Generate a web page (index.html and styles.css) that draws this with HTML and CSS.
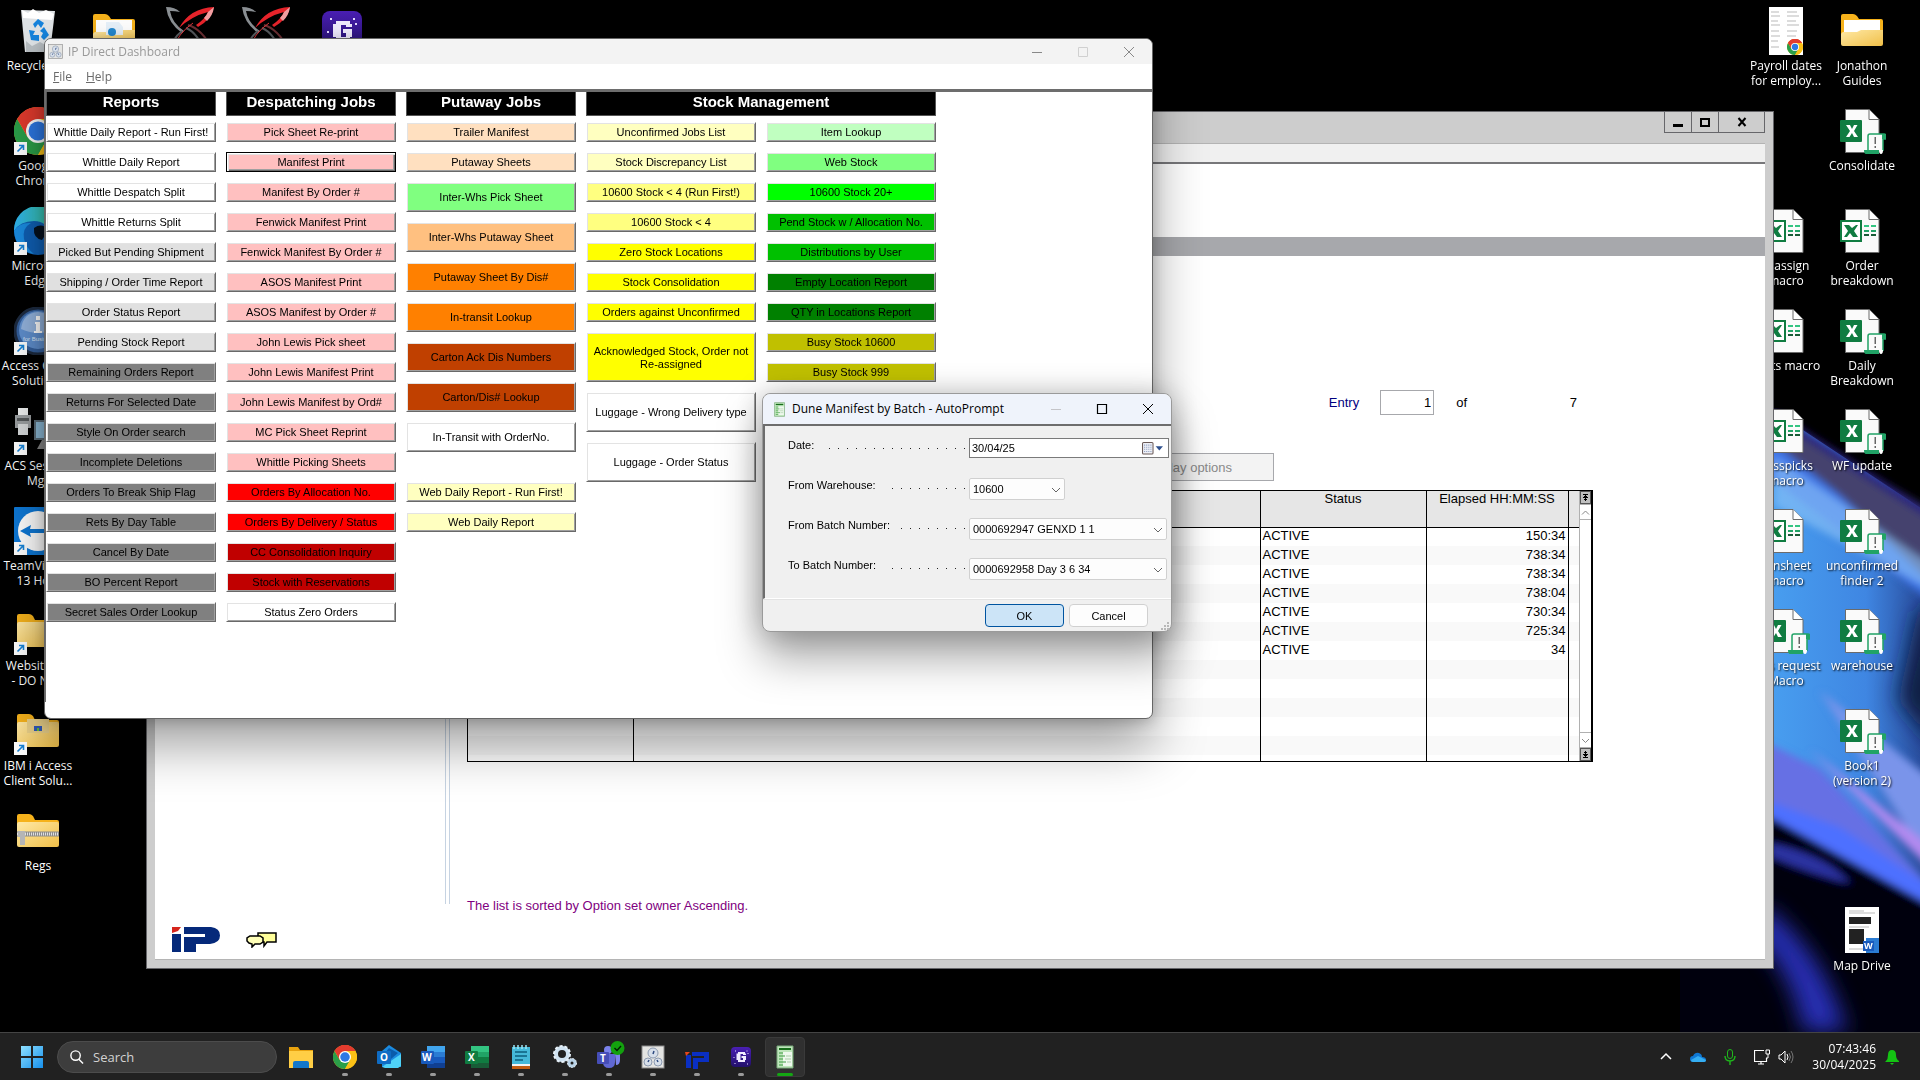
FILE: index.html
```html
<!DOCTYPE html>
<html lang="en">
<head>
  <meta charset="UTF-8" />
  <meta name="viewport" content="width=device-width, initial-scale=1.0" />
  <title>IP Direct Dashboard</title>
  <link rel="stylesheet" href="styles.css">
</head>
<body>
  <!-- shared icon symbols -->
  <svg class="defs" aria-hidden="true">
    <defs>
      <linearGradient id="gFolder" x1="0" y1="0" x2="1" y2="1"><stop offset="0" stop-color="#ffe9a6"/><stop offset="1" stop-color="#f0bf48"/></linearGradient>
      <linearGradient id="gEdge" x1="0" y1="0" x2="1" y2="0"><stop offset="0" stop-color="#2fb2f0"/><stop offset="1" stop-color="#3ccf8e"/></linearGradient>
      <linearGradient id="gG" x1="0" y1="0" x2="0" y2="1"><stop offset="0" stop-color="#4a1fb4"/><stop offset="1" stop-color="#22106a"/></linearGradient>
      <linearGradient id="gWin" x1="0" y1="0" x2="1" y2="1"><stop offset="0" stop-color="#8ee0ff"/><stop offset="1" stop-color="#1690ec"/></linearGradient>
    </defs>
    <symbol id="arrow" viewBox="0 0 13 13"><rect width="13" height="13" fill="#fff"/><path d="M3.500 9.500 9 4M5 3.500h4.500V8" fill="none" stroke="#1783d8" stroke-width="1.600"/></symbol>
    <symbol id="chrome" viewBox="0 0 48 48">
      <circle cx="24" cy="24" r="24" fill="#fbc116"/>
      <path d="M24 24 3.200 12A24 24 0 0 1 44.800 12H24z" fill="#e33b2e"/>
      <path d="M3.200 12A24 24 0 0 0 24 48L34.400 30 24 24 13.600 30z" fill="#2b9f49"/>
      <path d="M3.200 12 13.600 30 24 13 44.800 12A24 24 0 0 0 3.200 12" fill="#e33b2e"/>
      <path d="M24 12h20.800A24 24 0 0 1 24 48l10.400-18z" fill="#fbc116"/>
      <circle cx="24" cy="24" r="12" fill="#fff"/><circle cx="24" cy="24" r="9.500" fill="#2d78e4"/>
    </symbol>
    <symbol id="folder" viewBox="0 0 48 48">
      <path d="M3 9q0-2 2-2h10q2 0 4 2l2 3h22q2 0 2 2v23H3z" fill="#f6b21b"/>
      <path d="M6 13h36v15H6z" fill="#fff"/>
      <path d="M3 28q0-3 3-3h13l4-2h22v14q0 2-2 2H5q-2 0-2-2z" fill="url(#gFolder)"/>
    </symbol>
    <symbol id="folder2" viewBox="0 0 48 48">
      <path d="M3 9q0-2 2-2h10q2 0 4 2l2 4h22q2 0 2 2v22H3z" fill="#f6b21b"/>
      <path d="M3 17q0-2 2-2h38q2 0 2 2v21q0 2-2 2H5q-2 0-2-2z" fill="url(#gFolder)"/>
    </symbol>
    <symbol id="page" viewBox="0 0 48 48"><path d="M7.500 2.500H31l10 10v33H7.500z" fill="#fafafa" stroke="#6b6b6b"/><path d="M31 2.500v10h10" fill="#fff" stroke="#6b6b6b"/></symbol>
    <symbol id="xlsm" viewBox="0 0 48 48">
      <use href="#page"/>
      <rect x="2" y="13" width="22" height="22" rx="1" fill="#107c41"/>
      <path d="M8 18h4l2 4 2-4h3.500L16 24l4 6h-4l-2-4-2.500 4H8l4-6z" fill="#fff"/>
      <path d="M30 43V29q0-2 2-2h14q2 0 2 2v3h-3v12" fill="#fafafa" stroke="#21a366" stroke-width="1.500"/>
      <path d="M44 27h3q1 0 1 2v3h-4zM26 43h15v4H28q-2 0-2-4z" fill="#21a366"/>
      <path d="M41 43h4q0 4-2 4t-2-4z" fill="#fff"/>
      <path d="M36.500 30h1.500v7h-1.500zM36.500 39h1.500v2h-1.500z" fill="#666"/>
    </symbol>
    <symbol id="xlsx" viewBox="0 0 48 48">
      <use href="#page"/>
      <rect x="3" y="14" width="20" height="20" fill="#fff" stroke="#107c41" stroke-width="2"/>
      <path d="M6 18h5l3 3 4-3h2l-4 6 4 6h-5l-3-4-3 4H6l4-6z" fill="#107c41"/>
      <path d="M26 19h5M33 19h5" stroke="#33c481" stroke-width="2"/><path d="M26 24h5M33 24h5" stroke="#21a366" stroke-width="2"/><path d="M26 28h5M33 28h5" stroke="#185c37" stroke-width="2"/>
    </symbol>
    <symbol id="swirl" viewBox="0 0 48 48">
      <path d="M0 0q9 0 14 5-5-1-10-1 2 12 14 20l-2 2Q2 16 0 0z" fill="#8b9094"/>
      <path d="M20 21q12 5 19 25" fill="none" stroke="#55595d" stroke-width="2"/>
      <path d="M22 18q14 4 24 24" fill="none" stroke="#6c3034" stroke-width="2"/>
      <path d="M16 24q-10 8-12 20" fill="none" stroke="#5b5f63" stroke-width="2"/>
      <path d="M27 16Q12 26 6 44" fill="none" stroke="#e0363c" stroke-width="1"/>
      <path d="M48 0Q24 1 13 21 26 9 42 5q-3 7-12 13l2 2Q46 12 48 0z" fill="#e8242b"/>
      <path d="M48 0l-6 5q-1 3-4 6l3 3q6-6 7-14z" fill="#f3a0a3"/>
    </symbol>
    <symbol id="gapp" viewBox="0 0 40 40">
      <rect width="40" height="40" rx="8" fill="url(#gG)"/>
      <path d="M28 13v-3H14v3h-3v13h3v4h14v-4h2v-8h-9v4h3v4h-5V14h5v2h6v-3z" fill="#f1ecff"/>
      <path d="M8 7h2v2H8zM31 7h2v2h-2zM5 20h2v2H5zM33 12h2v2h-2zM7 32h2v2H7zM32 33h2v2h-2z" fill="#e4dcff"/>
    </symbol>
    <symbol id="report" viewBox="0 0 24 24"><path d="M4 1h16v22H4z" fill="#bfe6bc" stroke="#79a878"/><path d="M6 4h12" stroke="#176d1a" stroke-width="2"/><path d="M10 7h9v14h-9z" fill="#eef8ed"/><path d="M6 8h4M6 11h6M6 14h4M6 17h7M6 20h4" stroke="#3d9a40"/><path d="M13 11h5M12 14h6M14 17h4" stroke="#a9cda8"/></symbol>
    <symbol id="gauge" viewBox="0 0 24 24"><rect x="1" y="1" width="22" height="22" fill="#e4e4e2" stroke="#8c8c8c"/><g fill="#d7dfea" stroke="#8c9ab0"><circle cx="12" cy="8" r="5"/><circle cx="7" cy="17" r="4"/><circle cx="17" cy="17" r="4"/></g><path d="M12 9l1-3M7 17l1-2M17 17l-1-2" stroke="#2e4a80" stroke-width="1.500"/></symbol>
    <symbol id="iplogo" viewBox="0 0 48 25">
      <path d="M0 7h9v18H0z" fill="#05297a"/><path d="M0 0h9L6 4 0 6z" fill="#d6251c"/>
      <path d="M12 0h27q9 1 9 8.500T38 17H24v8H12V10h21v-3H12z" fill="#05297a"/>
    </symbol>
  </svg>

  <main class="desktop">
    <!-- wallpaper ribbon -->
    <svg class="wallpaper" viewBox="0 0 240 640" preserveAspectRatio="none" aria-hidden="true">
      <defs>
        <filter id="b4"><feGaussianBlur stdDeviation="4"/></filter>
        <filter id="b10"><feGaussianBlur stdDeviation="11"/></filter>
        <linearGradient id="sky" x1="0" y1="0" x2="1" y2="0"><stop offset="0" stop-color="#4ba6f4"/><stop offset=".7" stop-color="#3f86e2"/><stop offset="1" stop-color="#2a4fa0"/></linearGradient>
      </defs>
      <path d="M60-20 240 102V526L90 420H60z" fill="url(#sky)"/>
      <g filter="url(#b4)">
        <path d="M60-14 250 104V180L160 90 60 10z" fill="#45426e"/>
        <path d="M60-20 250 106v8L60-10z" fill="#261c7c"/>
        <path d="M60 8 160 90 250 178v20L140 110 60 50z" fill="#3e74e8"/>
        <path d="M94 50 250 160v26L94 100z" fill="#8fc4f6" opacity=".6"/>
        <path d="M80 340 140 370 250 490v50L80 430z" fill="#6670e4"/>
        <path d="M140 290 250 380v90z" fill="#7a94ea"/>
        <path d="M130 350 250 450v22z" fill="#b48af0"/>
        <path d="M80 400 160 430 250 490v30L80 424z" fill="#4d70ff"/>
        <path d="M80 414 250 510v180H-20V420z" fill="#04040c"/>
        <path d="M90 446q60 14 80 42-40-10-80-28z" fill="#2a30a0"/>
      </g>
      <g filter="url(#b10)">
        <path d="M238 210 260 200V350L218 300z" fill="#101c40"/>
        <path d="M85 510q60 50 82 130h-44Q110 570 70 540z" fill="#272db4"/>
      </g>
    </svg>

    <ul class="icons icons-left">
      <li class="c1">
        <svg viewBox="0 0 48 48"><path d="M7 3 41 4 36 45H11z" fill="#dfe3e6"/><path d="M8 3l6 3 5-4 6 4 7-3 8 4-2 6-29-2z" fill="#fff"/><path d="M12 34l6 5 8-4 9 5-1 5H12z" fill="#b8bec2"/><path d="M19 17l5-5 6 4-3 5-3-4-3 4zM30 20l5 8-5 5-3-3 2-4-3-2zM15 23l6 1-2 4h6v6l-8-1z" fill="#1583dc"/></svg>
        <a href="#">Recycle Bin</a></li>
      <li class="c2"><svg viewBox="0 0 48 48"><use href="#folder"/><path d="M16 15h13l4 5v8H16z" fill="#e8f2fb"/><circle cx="22" cy="25" r="4" fill="#2489d0"/></svg></li>
      <li class="c3"><svg viewBox="0 0 48 48"><use href="#swirl"/></svg></li>
      <li class="c4"><svg viewBox="0 0 48 48"><use href="#swirl"/></svg></li>
      <li class="c5"><svg viewBox="0 0 48 48"><use href="#gapp" x="4" y="4" width="40" height="40"/></svg></li>
      <li class="c1"><svg viewBox="0 0 48 48"><use href="#chrome"/><use href="#arrow" y="35" width="13" height="13"/></svg><a href="#">Google<br>Chrome</a></li>
      <li class="c1"><svg viewBox="0 0 48 48"><circle cx="24" cy="24" r="24" fill="#0f5fb4"/><path d="M0 24A24 24 0 0 1 48 22q-2 10-14 10Q36 14 20 14 6 14 0 24z" fill="url(#gEdge)"/><path d="M0 24q6-9 17-8-9 5-7 16 2 9 10 15Q2 44 0 24z" fill="#1a8be0"/><path d="M20 21q9-6 14 3l-6 9q-9-2-8-12z" fill="#04101e"/><use href="#arrow" y="35" width="13" height="13"/></svg><a href="#">Microsoft<br>Edge</a></li>
      <li class="c1"><svg viewBox="0 0 48 48"><circle cx="24" cy="24" r="23" fill="#345f9c" stroke="#1d2b40" stroke-width="3"/><circle cx="24" cy="23" r="19" fill="#5f8fce"/><path d="M7 22q2-16 17-17 15 1 17 17-16 8-34 0z" fill="#94b4de"/><path d="M22 9h4v4h-4zM21 15h5v9h2v2h-8v-2h2v-7h-1z" fill="#fff"/><text x="9" y="34" class="tiny">for Business</text><use href="#arrow" y="35" width="13" height="13"/></svg><a href="#">Access Client<br>Solutions</a></li>
      <li class="c1"><svg viewBox="0 0 48 48"><path d="M4 1h10v8H4z" fill="#eef0f0"/><path d="M1 8h16v13H1z" fill="#9b9fa1"/><path d="M4 17h10v11H4z" fill="#d5d8d9"/><path d="M3 11h12v3H3z" fill="#55595b"/><path d="M20 13h27v20H20z" fill="#5b6d78"/><path d="M22 15h23v16H22z" fill="#8dbbd8"/><path d="M28 33h10l3 9H23z" fill="#888"/><use href="#arrow" y="35" width="13" height="13"/></svg><a href="#">ACS Session<br>Mgr</a></li>
      <li class="c1"><svg viewBox="0 0 48 48"><rect width="48" height="48" rx="1" fill="#0e78d6"/><circle cx="24" cy="24" r="20" fill="#fff"/><path d="M6 24l11-6-1 4h16l-1-4 11 6-11 6 1-4H16l1 4z" fill="#0e78d6"/><use href="#arrow" y="35" width="13" height="13"/></svg><a href="#">TeamViewer<br>13 Host</a></li>
      <li class="c1"><svg viewBox="0 0 48 48"><use href="#folder2"/><use href="#arrow" y="35" width="13" height="13"/></svg><a href="#">Websites IP<br>- DO NOT</a></li>
      <li class="c1"><svg viewBox="0 0 48 48"><use href="#folder2"/><path d="M13 12h22v14H13z" fill="#e9cf88"/><path d="M20 19h8v5h-8z" fill="#3059b8"/><path d="M23 21h2v3h-2z" fill="#6b3"/><use href="#arrow" y="35" width="13" height="13"/></svg><a href="#">IBM i Access<br>Client Solu...</a></li>
      <li class="c1"><svg viewBox="0 0 48 48"><use href="#folder2"/><path d="M3 27h42" stroke="#8c8c8c" stroke-width="5"/><path d="M3 27h42" stroke="#e0e0e0" stroke-width="3" stroke-dasharray="1 1"/><path d="M4 24h7v14H6V30H4z" fill="#b5b5b5"/></svg><a href="#">Regs</a></li>
    </ul>

    <ul class="icons icons-right">
      <li class="c1"><svg viewBox="0 0 48 48"><path d="M7 0h34v48H7z" fill="#fff"/><path d="M9 5h8M9 9h9M9 14h7M9 18h9M9 24h8M9 29h9M9 34h7M9 40h8M25 5h10M25 9h12M25 14h9M25 18h12M25 24h10M25 29h9" stroke="#b9b9b9"/><use href="#chrome" x="25" y="32" width="16" height="16"/></svg><a href="#">Payroll dates<br>for employ...</a></li>
      <li class="c2"><svg viewBox="0 0 48 48"><use href="#folder"/></svg><a href="#">Jonathon<br>Guides</a></li>
      <li class="c2"><svg viewBox="0 0 48 48"><use href="#xlsm"/></svg><a href="#">Consolidate</a></li>
      <li class="c1"><svg viewBox="0 0 48 48"><use href="#xlsx"/></svg><a href="#">reassign<br>macro</a></li>
      <li class="c2"><svg viewBox="0 0 48 48"><use href="#xlsx"/></svg><a href="#">Order<br>breakdown</a></li>
      <li class="c1"><svg viewBox="0 0 48 48"><use href="#xlsx"/></svg><a href="#">ports macro</a></li>
      <li class="c2"><svg viewBox="0 0 48 48"><use href="#xlsm"/></svg><a href="#">Daily<br>Breakdown</a></li>
      <li class="c1"><svg viewBox="0 0 48 48"><use href="#xlsx"/></svg><a href="#">misspicks<br>macro</a></li>
      <li class="c2"><svg viewBox="0 0 48 48"><use href="#xlsm"/></svg><a href="#">WF update</a></li>
      <li class="c1"><svg viewBox="0 0 48 48"><use href="#xlsx"/></svg><a href="#">runsheet<br>macro</a></li>
      <li class="c2"><svg viewBox="0 0 48 48"><use href="#xlsm"/></svg><a href="#">unconfirmed<br>finder 2</a></li>
      <li class="c1"><svg viewBox="0 0 48 48"><use href="#xlsm"/></svg><a href="#">pals request<br>Macro</a></li>
      <li class="c2"><svg viewBox="0 0 48 48"><use href="#xlsm"/></svg><a href="#">warehouse</a></li>
      <li class="c2"><svg viewBox="0 0 48 48"><use href="#xlsm"/></svg><a href="#">Book1<br>(version 2)</a></li>
      <li class="c2 last"><svg viewBox="0 0 48 48"><path d="M7 0h34v46H7z" fill="#fff"/><path d="M11 4h15M11 6h26M11 20h20M11 42h14" stroke="#bbb"/><path d="M11 10h22v7H11zM11 22h15v15H11z" fill="#222"/><path d="M28 31h13v15H28z" fill="#2b7cd3"/><rect x="25" y="34" width="11" height="10" fill="#185abd"/><text x="26" y="42" class="word-s">W</text></svg><a href="#">Map Drive</a></li>
    </ul>

    <!-- host session window -->
    <section class="win session">
      <header class="session-title">
        <button aria-label="Minimize"><svg viewBox="0 0 12 12"><path d="M1 8h10v3H1z"/></svg></button>
        <button aria-label="Maximize"><svg viewBox="0 0 12 12"><path d="M2 3h8v7H2z" fill="none" stroke="#000" stroke-width="2"/></svg></button>
        <button class="wide" aria-label="Close"><svg viewBox="0 0 12 12"><path d="M2.500 2l7 8M9.500 2l-7 8" stroke="#000" stroke-width="2"/></svg></button>
      </header>
      <div class="session-body">
        <div class="session-menu"></div>
        <div class="session-band"></div>
        <div class="session-cols">
          <div class="side"></div>
          <div class="session-main">
            <div class="entry">
              <label for="entryNo">Entry</label>
              <input id="entryNo" type="text" value="1">
              <span>of</span>
              <span class="total">7</span>
            </div>
            <button class="display-options" disabled>Display options</button>
            <div class="list">
              <table>
                <colgroup><col class="col-a"><col><col class="col-status"><col class="col-time"><col class="col-end"></colgroup>
                <thead><tr><th></th><th></th><th>Status</th><th>Elapsed HH:MM:SS</th><th></th></tr></thead>
                <tbody>
                  <tr><td></td><td></td><td>ACTIVE</td><td>150:34</td><td></td></tr>
                  <tr><td></td><td></td><td>ACTIVE</td><td>738:34</td><td></td></tr>
                  <tr><td></td><td></td><td>ACTIVE</td><td>738:34</td><td></td></tr>
                  <tr><td></td><td></td><td>ACTIVE</td><td>738:04</td><td></td></tr>
                  <tr><td></td><td></td><td>ACTIVE</td><td>730:34</td><td></td></tr>
                  <tr><td></td><td></td><td>ACTIVE</td><td>725:34</td><td></td></tr>
                  <tr><td></td><td></td><td>ACTIVE</td><td>34</td><td></td></tr>
                  <tr><td></td><td></td><td></td><td></td><td></td></tr>
                  <tr><td></td><td></td><td></td><td></td><td></td></tr>
                  <tr><td></td><td></td><td></td><td></td><td></td></tr>
                  <tr><td></td><td></td><td></td><td></td><td></td></tr>
                  <tr><td></td><td></td><td></td><td></td><td></td></tr>
                  <tr class="stub"><td></td><td></td><td></td><td></td><td></td></tr>
                </tbody>
              </table>
              <div class="scroll">
                <button class="jump" aria-label="First page"><svg viewBox="0 0 9 9"><path d="M2 1h5v1H2zM4 2h1v6H4zM3 3h3v1H3zM2 4h5v1H2zM3 6h3v1H3z"/></svg></button>
                <button aria-label="Up"><svg viewBox="0 0 9 9"><path d="M1 6.500 4.500 3 8 6.500" fill="none" stroke="#888"/></svg></button>
                <div class="track"></div>
                <button aria-label="Down"><svg viewBox="0 0 9 9"><path d="M1 3 4.500 6.500 8 3" fill="none" stroke="#888"/></svg></button>
                <button class="jump" aria-label="Last page"><svg viewBox="0 0 9 9"><path d="M2 7h5v1H2zM4 1h1v6H4zM3 5h3v1H3zM2 4h5v1H2zM3 2h3v1H3z"/></svg></button>
              </div>
            </div>
            <p class="sorted">The list is sorted by Option set owner Ascending.</p>
          </div>
        </div>
        <footer class="session-foot">
          <svg class="ip" viewBox="0 0 48 25"><use href="#iplogo"/></svg>
          <svg class="chat" viewBox="0 0 32 16"><path d="M12 1h18v9h-9l-3 4v-4h-6z" fill="#ffff99" stroke="#000" stroke-width="1.500"/><path d="M4 4h10l3 2v4l-3 2H9l-3 3v-3l-3-1-2-2V6z" fill="#ffffb8" stroke="#000" stroke-width="1.500"/></svg>
        </footer>
      </div>
    </section>

    <!-- dashboard -->
    <section class="win dashboard">
      <header class="dash-title">
        <svg class="app" viewBox="0 0 24 24"><use href="#gauge"/></svg>
        <h1>IP Direct Dashboard</h1>
        <button aria-label="Minimize"><svg viewBox="0 0 12 12"><path d="M1 6.500h10" stroke="#888"/></svg></button>
        <button aria-label="Maximize" disabled><svg viewBox="0 0 12 12"><path d="M1.500 1.500h9v9h-9z" fill="none" stroke="#d0d0d0"/></svg></button>
        <button aria-label="Close"><svg viewBox="0 0 12 12"><path d="M1 1l10 10M11 1 1 11" stroke="#888"/></svg></button>
      </header>
      <nav class="dash-menu"><a href="#"><u>F</u>ile</a><a href="#"><u>H</u>elp</a></nav>
      <div class="jobs">
        <section class="jobcol">
          <h2>Reports</h2>
          <button class="white">Whittle Daily Report - Run First!</button>
          <button class="white">Whittle Daily Report</button>
          <button class="white">Whittle Despatch Split</button>
          <button class="white">Whittle Returns Split</button>
          <button class="silver">Picked But Pending Shipment</button>
          <button class="silver">Shipping / Order Time Report</button>
          <button class="silver">Order Status Report</button>
          <button class="silver">Pending Stock Report</button>
          <button class="gray">Remaining Orders Report</button>
          <button class="gray">Returns For Selected Date</button>
          <button class="gray">Style On Order search</button>
          <button class="gray">Incomplete Deletions</button>
          <button class="gray">Orders To Break Ship Flag</button>
          <button class="gray">Rets By Day Table</button>
          <button class="gray">Cancel By Date</button>
          <button class="gray">BO Percent Report</button>
          <button class="gray">Secret Sales Order Lookup</button>
        </section>
        <section class="jobcol">
          <h2>Despatching Jobs</h2>
          <button class="pink">Pick Sheet Re-print</button>
          <button class="pink current">Manifest Print</button>
          <button class="pink">Manifest By Order #</button>
          <button class="pink">Fenwick Manifest Print</button>
          <button class="pink">Fenwick Manifest By Order #</button>
          <button class="pink">ASOS Manifest Print</button>
          <button class="pink">ASOS Manifest by Order #</button>
          <button class="pink">John Lewis Pick sheet</button>
          <button class="pink">John Lewis Manifest Print</button>
          <button class="pink">John Lewis Manifest by Ord#</button>
          <button class="pink">MC Pick Sheet Reprint</button>
          <button class="pink">Whittle Picking Sheets</button>
          <button class="red">Orders By Allocation No.</button>
          <button class="red">Orders By Delivery / Status</button>
          <button class="darkred">CC Consolidation Inquiry</button>
          <button class="darkred">Stock with Reservations</button>
          <button class="white">Status Zero Orders</button>
        </section>
        <section class="jobcol">
          <h2>Putaway Jobs</h2>
          <button class="peach">Trailer Manifest</button>
          <button class="peach">Putaway Sheets</button>
          <button class="green2 tall">Inter-Whs Pick Sheet</button>
          <button class="apricot tall">Inter-Whs Putaway Sheet</button>
          <button class="orange tall">Putaway Sheet By Dis#</button>
          <button class="orange tall">In-transit Lookup</button>
          <button class="rust tall">Carton Ack Dis Numbers</button>
          <button class="rust tall">Carton/Dis# Lookup</button>
          <button class="white tall">In-Transit with OrderNo.</button>
          <button class="cream gap-above">Web Daily Report - Run First!</button>
          <button class="cream">Web Daily Report</button>
        </section>
        <section class="jobcol double">
          <h2>Stock Management</h2>
          <div class="jobcol">
            <button class="cream">Unconfirmed Jobs List</button>
            <button class="cream">Stock Discrepancy List</button>
            <button class="lemon">10600 Stock &lt; 4 (Run First!)</button>
            <button class="lemon">10600 Stock &lt; 4</button>
            <button class="yellow">Zero Stock Locations</button>
            <button class="yellow">Stock Consolidation</button>
            <button class="yellow">Orders against Unconfirmed</button>
            <button class="yellow taller">Acknowledged Stock, Order not Re-assigned</button>
            <button class="white big">Luggage - Wrong Delivery type</button>
            <button class="white big">Luggage - Order Status</button>
          </div>
          <div class="jobcol">
            <button class="green1">Item Lookup</button>
            <button class="green2">Web Stock</button>
            <button class="green3">10600 Stock 20+</button>
            <button class="green4">Pend Stock w / Allocation No.</button>
            <button class="green4">Distributions by User</button>
            <button class="green5">Empty Location Report</button>
            <button class="green5">QTY in Locations Report</button>
            <button class="olive">Busy Stock 10600</button>
            <button class="olive">Busy Stock 999</button>
          </div>
        </section>
      </div>
    </section>

    <!-- batch prompt -->
    <form class="win prompt">
      <header class="prompt-title">
        <svg class="app" viewBox="0 0 24 24"><use href="#report"/></svg>
        <h1>Dune Manifest by Batch - AutoPrompt</h1>
        <button type="button" aria-label="Minimize" disabled><svg viewBox="0 0 12 12"><path d="M1 6.500h10" stroke="#c4c4c8"/></svg></button>
        <button type="button" aria-label="Maximize"><svg viewBox="0 0 12 12"><path d="M1.500 1.500h9v9h-9z" fill="none" stroke="#000" stroke-width="1.200"/></svg></button>
        <button type="button" aria-label="Close"><svg viewBox="0 0 12 12"><path d="M1 1l10 10M11 1 1 11" stroke="#000"/></svg></button>
      </header>
      <div class="fields">
        <div class="field"><label for="date">Date:</label><span class="dots"></span>
          <div class="datebox"><input id="date" type="text" value="30/04/25"><button type="button" aria-label="Calendar"><svg viewBox="0 0 20 12"><rect x=".5" y=".5" width="10" height="11" rx="1" fill="#eef0f6" stroke="#6a5a58"/><path d="M2 3h7M2 5h7M2 7h7M2 9h7" stroke="#8c9cc0" stroke-dasharray="1 1"/><path d="M13 4h7l-3.500 4z" fill="#2d4f8e"/></svg></button></div></div>
        <div class="field"><label for="wh">From Warehouse:</label><span class="dots"></span>
          <div class="combo small"><select id="wh"><option>10600</option></select><svg viewBox="0 0 10 6"><path d="M1 1l4 4 4-4" fill="none" stroke="#666"/></svg></div></div>
        <div class="field"><label for="fromBatch">From Batch Number:</label><span class="dots"></span>
          <div class="combo"><select id="fromBatch"><option>0000692947 GENXD 1 1</option></select><svg viewBox="0 0 10 6"><path d="M1 1l4 4 4-4" fill="none" stroke="#666"/></svg></div></div>
        <div class="field"><label for="toBatch">To Batch Number:</label><span class="dots"></span>
          <div class="combo"><select id="toBatch"><option>0000692958 Day 3 6 34</option></select><svg viewBox="0 0 10 6"><path d="M1 1l4 4 4-4" fill="none" stroke="#666"/></svg></div></div>
      </div>
      <footer class="prompt-foot">
        <button type="button" class="ok">OK</button>
        <button type="button">Cancel</button>
        <svg class="grip" viewBox="0 0 9 9"><path d="M7 1h2v2H7zM7 4h2v2H7zM7 7h2v2H7zM4 4h2v2H4zM4 7h2v2H4zM1 7h2v2H1z" fill="#b8b8b8"/></svg>
      </footer>
    </form>
  </main>

  <footer class="taskbar">
    <button class="start" aria-label="Start"><svg viewBox="0 0 24 24"><path d="M1 1h10v10H1zM13 1h10v10H13zM1 13h10v10H1zM13 13h10v10H13z" fill="url(#gWin)"/></svg></button>
    <label class="search"><svg viewBox="0 0 16 16"><circle cx="7" cy="6.500" r="5" fill="none" stroke="#fff" stroke-width="1.500"/><path d="M10.500 10.500 15 15" stroke="#fff" stroke-width="1.500"/></svg><input type="text" placeholder="Search" aria-label="Search"></label>
    <div class="apps">
      <button class="closed" aria-label="File Explorer"><svg viewBox="0 0 24 24"><path d="M0 2h9l2 3h13v18H0z" fill="#e8a20e"/><path d="M0 6h24v17H0z" fill="#ffce45"/><path d="M4 23v-5q0-2 2-2h12q2 0 2 2v5z" fill="#1377ca"/></svg></button>
      <button aria-label="Chrome"><svg viewBox="0 0 48 48"><use href="#chrome"/></svg></button>
      <button aria-label="Outlook"><svg viewBox="0 0 24 24"><path d="M12 0 24 8v14H5V6z" fill="#1b8be0"/><path d="M5 22l19-13v12l-3 2H8z" fill="#4fd2f7"/><path d="M12 3l9 5-7 6-6-6z" fill="#0b5cab"/><rect y="6" width="14" height="13" rx="1" fill="#0f6cc4"/><text x="3" y="16" class="ico">O</text></svg></button>
      <button aria-label="Word"><svg viewBox="0 0 24 24"><path d="M6 1h18v6H6z" fill="#41a5ee"/><path d="M6 7h18v5H6z" fill="#2b7cd3"/><path d="M6 12h18v6H6z" fill="#185abd"/><path d="M6 18h18v5H6z" fill="#103f91"/><rect y="6" width="13" height="13" rx="1" fill="#185abd"/><text x="1" y="16" class="ico">W</text></svg></button>
      <button aria-label="Excel"><svg viewBox="0 0 24 24"><path d="M6 1h18v6H6z" fill="#33c481"/><path d="M6 7h18v5H6z" fill="#21a366"/><path d="M6 12h18v6H6z" fill="#107c41"/><path d="M6 18h18v5H6z" fill="#185c37"/><rect y="6" width="13" height="13" rx="1" fill="#107c41"/><text x="3" y="16" class="ico">X</text></svg></button>
      <button aria-label="Notepad"><svg viewBox="0 0 24 24"><path d="M3 2h18v20H3z" fill="#45b9d9"/><path d="M3 21h18v3H3z" fill="#c25d12"/><path d="M3 19h18v2H3z" fill="#f3f3f3"/><path d="M6 7h12M6 11h12M6 15h8" stroke="#0c5f7d" stroke-width="1.500"/><path d="M5 0v4M9 0v4M13 0v4M17 0v4" stroke="#9ce6f6" stroke-width="1.500"/></svg></button>
      <button aria-label="Services"><svg viewBox="0 0 24 24"><circle cx="9" cy="9" r="6" fill="none" stroke="#cfe2f1" stroke-width="4"/><circle cx="9" cy="9" r="8" fill="none" stroke="#e8f2fa" stroke-width="2" stroke-dasharray="3 2"/><circle cx="19" cy="18" r="3" fill="none" stroke="#b9d3e8" stroke-width="3"/><circle cx="19" cy="18" r="4.500" fill="none" stroke="#e8f2fa" stroke-width="1" stroke-dasharray="2 1"/></svg></button>
      <button aria-label="Teams"><svg viewBox="0 0 24 24"><circle cx="11" cy="5" r="4" fill="#7b83eb"/><path d="M6 9h12v8q0 6-6 6t-6-6z" fill="#6068d4"/><path d="M18 9h5v6q0 5-4 5z" fill="#7b83eb"/><rect y="7" width="12" height="12" rx="1" fill="#464eb8"/><text x="3" y="17" class="ico">T</text><circle cx="20.500" cy="3" r="7" fill="#13a10e"/><path d="M17.500 3l2.500 2.500 4-4.500" fill="none" stroke="#001c00" stroke-width="1.400"/></svg></button>
      <button aria-label="IP Direct Dashboard"><svg viewBox="0 0 24 24"><use href="#gauge"/></svg></button>
      <button aria-label="IP"><svg viewBox="0 0 24 24"><path d="M1 10h5v13H1z" fill="#0a2fc2"/><path d="M0 7h5L1 11z" fill="#e5481c"/><path d="M7 7h17v10H13v7H8V13h11v-2H7z" fill="#0a2fc2"/></svg></button>
      <button aria-label="G"><svg viewBox="-4 -4 48 48"><use href="#gapp" width="40" height="40"/></svg></button>
      <button class="active" aria-label="AutoPrompt"><svg viewBox="0 0 24 24"><use href="#report"/></svg></button>
    </div>
    <div class="tray">
      <svg viewBox="0 0 16 16"><path d="M3 10l5-5 5 5" fill="none" stroke="#fff" stroke-width="1.500"/></svg>
      <svg viewBox="0 0 16 16"><path d="M3 13q-3 0-3-3t3-3q2-4 6-3 3 1 3 4 4 0 4 3 0 2-2 2z" fill="#0f78d4"/><path d="M3 13q-2 0-2-2l7-4 8 4q0 2-2 2z" fill="#35aef2"/></svg>
      <svg viewBox="0 0 16 16"><rect x="5.500" y=".5" width="5" height="9" rx="2.500" fill="none" stroke="#1fb81c"/><path d="M3 7q0 5 5 5t5-5M8 12v4" fill="none" stroke="#1fb81c" stroke-width="1.400"/></svg>
      <svg viewBox="0 0 16 16"><path d="M10 1.500H.5v11h12V9M4 15h6M7 12v3" fill="none" stroke="#fff" stroke-width="1.200"/><path d="M12 1h3.500v4H12zM14 5v4h-2" fill="none" stroke="#fff"/></svg>
      <svg class="vol" viewBox="0 0 16 16"><path d="M1 6h2l4-4v12L3 10H1z" fill="none" stroke="#fff"/><path d="M9 5q2 3 0 6" fill="none" stroke="#fff"/><path d="M11 4q3 4 0 8M13 2q4 6 0 12" fill="none" stroke="#777"/></svg>
      <time class="clock">07:43:46<br>30/04/2025</time>
      <svg class="bell" viewBox="0 0 16 16"><path d="M2 12q2-2 2-6 0-5 4-5t4 5q0 4 3 6v1H1zM6 14h4l-2 2z" fill="#14c313"/></svg>
    </div>
  </footer>
</body>
</html>
```
FILE: styles.css
```css
* { box-sizing: border-box; }
body { margin: 0; height: 100vh; display: flex; flex-direction: column; background: #000; font-family: "Liberation Sans", Arial, sans-serif; font-size: 11px; overflow: hidden; }
button, input, select { font: inherit; color: inherit; margin: 0; padding: 0; }
h1, h2, p, ul { margin: 0; padding: 0; font-weight: normal; }
svg { display: block; }
.defs { position: absolute; width: 0; height: 0; }
.tiny { font-size: 6px; fill: #dfe9f7; }
.ico { font: bold 10px "Open Sans", sans-serif; fill: #fff; }
.word-s { font: bold 9px "Open Sans", sans-serif; fill: #fff; }

/* desktop */
.desktop { position: relative; flex: 1; display: flex; justify-content: space-between; min-height: 0; }
.wallpaper { position: absolute; right: 0; bottom: 0; width: 240px; height: 624px; }
.icons { position: relative; display: grid; grid-auto-rows: 100px; list-style: none; }
.icons-left { grid-template-columns: repeat(5, 76px); }
.icons-right { grid-template-columns: 76px 76px; margin-right: 20px; }
.icons li { display: flex; flex-direction: column; align-items: center; padding-top: 7px; }
.icons svg { width: 48px; height: 48px; flex: none; }
.icons a { margin-top: 3px; color: #fff; text-decoration: none; text-align: center; white-space: nowrap; font: 12px/15px "Open Sans", "Noto Sans", sans-serif; text-shadow: 1px 1px 2px #000; }
.c1 { grid-column: 1; }
.c2 { grid-column: 2; }
.c3 { grid-column: 3; }
.c4 { grid-column: 4; }
.c5 { grid-column: 5; }
.icons .last { grid-row: 10; }
.win { position: absolute; }

/* session window */
.session { left: 146px; right: 146px; top: 111px; padding: 0 8px 8px; background: #cdcdcd; border: 1px solid #66666a; font-size: 13px; }
.session-title { height: 31px; display: flex; justify-content: flex-end; align-items: flex-start; }
.session-title button { width: 28px; height: 21px; margin-left: -1px; background: none; border: 1px solid #66666a; border-top: 0; display: grid; place-items: center; }
.session-title .wide { width: 47px; }
.session-title svg { width: 12px; height: 12px; }
.session-body { background: #fff; border-top: 1px solid #b4b4b4; border-bottom: 1px solid #b4b4b4; }
.session-menu { height: 20px; background: #f0f0f0; border-bottom: 2px solid #77777a; }
.session-band { height: 19px; margin-top: 73px; background: #a7a8ac; }
.session-cols { display: flex; gap: 17px; }
.side { width: 295px; height: 648px; border-right: 1px solid #c6d3e2; box-shadow: inset -3px 0 #fff, inset -4px 0 #c6d3e2; }
.session-main { flex: 1; display: flex; flex-direction: column; align-items: flex-start; padding: 134px 172px 0 0; }
.entry { width: 100%; display: flex; justify-content: flex-end; align-items: center; padding-right: 16px; }
.entry label { color: #000080; margin-right: 21px; }
.entry input { width: 54px; height: 25px; border: 1px solid #a7a8ac; background: #fff; text-align: right; padding-right: 2px; margin-right: 22px; }
.total { width: 110px; text-align: right; }
.display-options { align-self: flex-end; width: 172px; height: 28px; margin: 38px 319px 9px 0; background: #f3f3f3; border: 1px solid #a7a8ac; color: #8a8a8a; }
.list { width: 100%; display: flex; border: 1px solid #000; }
.list table { flex: 1; table-layout: fixed; border-collapse: collapse; }
.col-a { width: 165px; }
.col-status { width: 166px; }
.col-time { width: 142px; }
.col-end { width: 11px; }
.list th { height: 36px; padding: 0; background: #e6e6e6; border-bottom: 1px solid #000; font-weight: normal; vertical-align: top; line-height: 16px; }
.list th, .list td { border-right: 1px solid #000; }
.list th:last-child, .list td:last-child { border-right: 0; }
.list td { height: 19px; padding: 0 2px 1px; line-height: 16px; }
.list td:nth-child(4) { text-align: right; }
.list tbody tr:nth-child(even) { background: #f9f9f9; }
.list .stub td { height: 6px; }
.scroll { width: 13px; display: flex; flex-direction: column; border-left: 1px solid #b0b0b0; border-right: 1px solid #000; }
.scroll button { height: 16px; background: #fff; border: 0; border-bottom: 1px solid #b0b0b0; border-top: 1px solid #b0b0b0; display: grid; place-items: center; }
.scroll .jump { height: 13px; background: #c0c0c0; border: 1px solid #555; }
.scroll svg { width: 9px; height: 9px; }
.track { flex: 1; }
.sorted { margin-top: 136px; color: #800080; line-height: 16px; }
.session-foot { display: flex; align-items: center; gap: 26px; padding: 13px 16px 7px 17px; }
.ip { width: 48px; height: 25px; }
.chat { width: 32px; height: 16px; }

/* dashboard window */
.dashboard { left: 44px; right: 767px; top: 38px; height: 681px; background: #fff; border: 1px solid #666; border-radius: 7px; box-shadow: 0 26px 52px rgba(0, 0, 0, .38), 0 2px 14px rgba(0, 0, 0, .2); }
.dash-title { height: 25px; display: flex; align-items: center; background: #f3f3f3; border-radius: 7px 7px 0 0; padding-left: 3px; color: #999; }
.dash-title h1, .prompt-title h1 { flex: 1; font: 12px/16px "Open Sans", "Noto Sans", sans-serif; }
.dash-title .app, .prompt-title .app { width: 15px; height: 15px; margin-right: 5px; }
.dash-title button, .prompt-title button { width: 46px; height: 24px; background: none; border: 0; display: grid; place-items: center; }
.dash-title button svg { width: 12px; height: 12px; }
.dash-menu { height: 28px; display: flex; gap: 14px; padding: 4px 8px; border-bottom: 3px solid #6d6d6d; font: 12px/18px "Open Sans", "Noto Sans", sans-serif; }
.dash-menu a { color: #6a6a6a; text-decoration: none; }
.jobs { display: flex; align-items: flex-start; gap: 10px; border-left: 1px solid #6d6d6d; height: 610px; }
.jobcol { width: 170px; display: flex; flex-direction: column; gap: 10px; }
.jobcol h2 { height: 24px; margin-bottom: -4px; background: #000; border: 1px solid #555; border-top: 0; color: #fff; text-align: center; font-size: 15px; font-weight: bold; line-height: 20px; }
.double { width: 350px; display: grid; grid-template-columns: 170px 170px; align-items: start; row-gap: 10px; }
.double h2 { grid-column: 1 / 3; }
.jobcol button { height: 20px; padding-top: 1px; line-height: 13px; color: #000; border: 1px solid; border-color: #fff #696969 #696969 #fff; box-shadow: inset 1px 1px #e3e3e3, inset -1px -1px #a0a0a0; }
.jobcol .tall { height: 30px; }
.jobcol .big { height: 40px; }
.jobcol .taller { height: 50px; }
.jobcol .gap-above { margin-top: 20px; }
.jobcol .current { border-color: #000; box-shadow: inset 1px 1px #fff, inset 2px 2px #e3e3e3, inset -1px -1px #696969, inset -2px -2px #a0a0a0; }
.white { background: #fff; }
.silver { background: #e0e0e0; }
.gray { background: #808080; }
.pink { background: #ffc0c0; }
.red { background: #f00; }
.darkred { background: #c00000; }
.peach { background: #ffe0c0; }
.apricot { background: #ffc080; }
.orange { background: #ff8000; }
.rust { background: #c04000; }
.cream { background: #ffffc0; }
.lemon { background: #ffff80; }
.yellow { background: #ff0; }
.olive { background: #c0c000; }
.green1 { background: #c0ffc0; }
.green2 { background: #80ff80; }
.green3 { background: #0f0; }
.green4 { background: #00c000; }
.green5 { background: #008000; }

/* prompt dialog */
.prompt { left: 762px; top: 393px; width: 410px; background: #f0f0f0; border: 1px solid #9a9a9a; border-radius: 8px; box-shadow: 0 26px 44px rgba(0, 0, 0, .34), 0 0 30px rgba(0, 0, 0, .24); color: #000; }
.prompt-title { height: 30px; display: flex; align-items: center; background: #eff3fb; border-radius: 8px 8px 0 0; padding-left: 9px; }
.prompt-title button svg { width: 12px; height: 12px; }
.fields { border-top: 2px solid #6d6d6d; border-left: 2px solid #6d6d6d; border-bottom: 1px solid #fff; padding: 12px 2px 0 23px; }
.field { height: 40px; display: flex; align-items: flex-start; }
.field label { line-height: 14px; }
.dots { flex: 1; height: 1px; margin: 10px 4px 0 8px; background: repeating-linear-gradient(to left, #222 0 1px, transparent 1px 9px); }
.datebox { width: 200px; height: 20px; display: flex; align-items: center; background: #fff; border: 1px solid #7a7a7a; padding: 0 5px 0 2px; }
.datebox input { flex: 1; min-width: 0; border: 0; outline: 0; background: none; }
.datebox button { width: 21px; height: 12px; border: 0; background: none; }
.combo { position: relative; width: 198px; height: 22px; margin-right: 2px; }
.combo.small { width: 96px; margin-right: 104px; }
.combo select { width: 100%; height: 100%; appearance: none; background: #fdfdfd; border: 1px solid #d0d0d0; border-radius: 2px; padding-left: 3px; }
.combo svg { position: absolute; right: 4px; top: 9px; width: 10px; height: 6px; pointer-events: none; }
.prompt-foot { position: relative; display: flex; justify-content: flex-end; gap: 5px; padding: 4px 23px; border-top: 1px solid #e3e3e3; }
.prompt-foot button { width: 79px; height: 23px; background: #fdfdfd; border: 1px solid #d0d0d0; border-radius: 4px; }
.prompt-foot .ok { background: #cce4f7; border-color: #0054a0; }
.grip { position: absolute; right: 2px; bottom: 1px; width: 9px; height: 9px; }

/* taskbar */
.taskbar { position: relative; height: 48px; display: flex; align-items: center; background: #212121; border-top: 1px solid #444; padding: 0 20px 0 12px; color: #fff; font-family: "Open Sans", "Noto Sans", sans-serif; }
.taskbar button { position: relative; width: 40px; height: 40px; border: 0; border-radius: 4px; background: none; display: grid; place-items: center; }
.taskbar button svg { width: 24px; height: 24px; overflow: visible; }
.search { width: 220px; height: 32px; margin: 0 4px 0 5px; display: flex; align-items: center; gap: 9px; padding: 0 11px; background: #3d3d3d; border: 1px solid #4c4c4c; border-radius: 16px; }
.search svg { width: 15px; height: 16px; }
.search input { width: 150px; border: 0; outline: 0; background: none; font-size: 13px; }
.search input::placeholder { color: #d2d2d2; opacity: 1; }
.apps { flex: 1; display: flex; gap: 4px; }
.apps button::after { content: ""; position: absolute; left: 17px; bottom: 1px; width: 6px; height: 3px; border-radius: 2px; background: #9a9a9a; }
.apps .closed::after { display: none; }
.apps .active { background: #303030; border: 1px solid #3a3a3a; }
.apps .active::after { left: 11px; bottom: 0; width: 16px; background: #14a713; }
.tray { display: flex; align-items: center; gap: 16px; }
.tray svg { width: 16px; height: 16px; }
.tray .vol { margin-left: -8px; }
.clock { width: 66px; text-align: right; white-space: nowrap; font-size: 12px; line-height: 16px; }
.tray .bell { margin-left: -8px; }
```
